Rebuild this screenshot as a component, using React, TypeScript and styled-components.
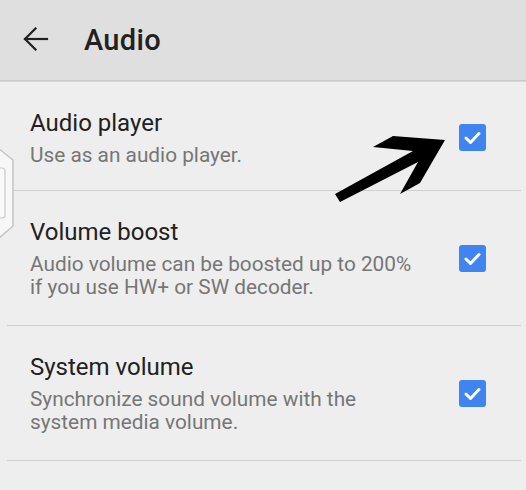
import styled, { createGlobalStyle } from 'styled-components';

const GlobalStyle = createGlobalStyle`
  html, body {
    margin: 0;
    padding: 0;
    background: #eeeeee;
  }
  body {
    font-family: Roboto, "Liberation Sans", sans-serif;
  }
`;

type Setting = {
  title: string;
  summary: string;
  checked: boolean;
};

const settings: Setting[] = [
  { title: 'Audio player', summary: 'Use as an audio player.', checked: true },
  {
    title: 'Volume boost',
    summary: 'Audio volume can be boosted up to 200% if you use HW+ or SW decoder.',
    checked: true,
  },
  {
    title: 'System volume',
    summary: 'Synchronize sound volume with the system media volume.',
    checked: true,
  },
];

const BackIcon = () => (
  <svg width="26" height="24" viewBox="0 0 26 24" fill="none" stroke="#212121" strokeWidth="2.2" strokeLinecap="square">
    <path d="M2 12H24" />
    <path d="M12.5 1.5L2 12L12.5 22.5" />
  </svg>
);

const CheckMark = () => (
  <svg width="27" height="27" viewBox="0 0 27 27" fill="none" stroke="#ffffff" strokeWidth="3" strokeLinecap="round" strokeLinejoin="round">
    <path d="M7 14L11.5 18.5L20 9.5" />
  </svg>
);

// the big hand-drawn pointer over the first checkbox
const Pointer = () => (
  <PointerSvg width="526" height="490" viewBox="0 0 526 490">
    <polygon
      points="335,194 413,151 373,147 393,136 445,140 420,183 400,194 418,162 340,202"
      fill="#000000"
    />
  </PointerSvg>
);

// edge of a floating tab peeking in from the left side
const SideTab = () => (
  <TabSvg width="16" height="96" viewBox="0 0 16 96">
    <path d="M-2 2L13 14V80L-2 93" fill="#f7f7f7" stroke="#c4c4c4" strokeWidth="1.5" />
    <rect x="-6" y="22" width="11" height="50" rx="3" fill="#fafafa" stroke="#c9c9c9" strokeWidth="1.2" />
  </TabSvg>
);

const App = () => {
  return (
    <Screen>
      <GlobalStyle />
      <Toolbar>
        <BackButton>
          <BackIcon />
        </BackButton>
        <Title>Audio</Title>
      </Toolbar>
      <List>
        {settings.map((s) => (
          <Row key={s.title}>
            <TextBlock>
              <RowTitle>{s.title}</RowTitle>
              <Summary>{s.summary}</Summary>
            </TextBlock>
            <Checkbox $checked={s.checked}>{s.checked && <CheckMark />}</Checkbox>
          </Row>
        ))}
      </List>
      <SideTab />
      <Pointer />
    </Screen>
  );
};

export default App;

const Screen = styled.div`
  position: relative;
  width: 526px;
  height: 490px;
  overflow: hidden;
  background: #eeeeee;
`;

const Toolbar = styled.header`
  height: 80px;
  display: flex;
  align-items: center;
  background: #dfdfdf;
  border-bottom: 1px solid #c9c9c9;
  box-shadow: 0 1px 0 #d6d6d6;
`;

const BackButton = styled.div`
  width: 26px;
  height: 24px;
  margin-left: 23px;
  margin-top: -2px;
  display: flex;
`;

const Title = styled.h1`
  margin: 0 0 0 35px;
  font-size: 29px;
  font-weight: 500;
  color: #212121;
  letter-spacing: 0.3px;
`;

const List = styled.div`
  margin: 1px 5px 0 7px;
`;

const Row = styled.div`
  display: flex;
  align-items: center;
  padding: 26px 35px 25px 23px;
  border-bottom: 1px solid #d0d0d0;

  &:first-child {
    padding-bottom: 22px;
  }
`;

const TextBlock = styled.div`
  flex: 1;
  min-width: 0;
`;

const RowTitle = styled.div`
  font-size: 24px;
  line-height: 30px;
  margin-bottom: 6px;
  color: #212121;
`;

const Summary = styled.div`
  font-size: 20.8px;
  line-height: 23.5px;
  color: #767676;
  max-width: 392px;
`;

const Checkbox = styled.div<{ $checked: boolean }>`
  width: 27px;
  height: 27px;
  border-radius: 3px;
  flex-shrink: 0;
  background: ${(p) => (p.$checked ? '#3f84f1' : 'transparent')};
  border: ${(p) => (p.$checked ? 'none' : '2px solid #757575')};
  display: flex;
`;

const PointerSvg = styled.svg`
  position: absolute;
  left: 0;
  top: 0;
  pointer-events: none;
`;

const TabSvg = styled.svg`
  position: absolute;
  left: 0;
  top: 146px;
`;
